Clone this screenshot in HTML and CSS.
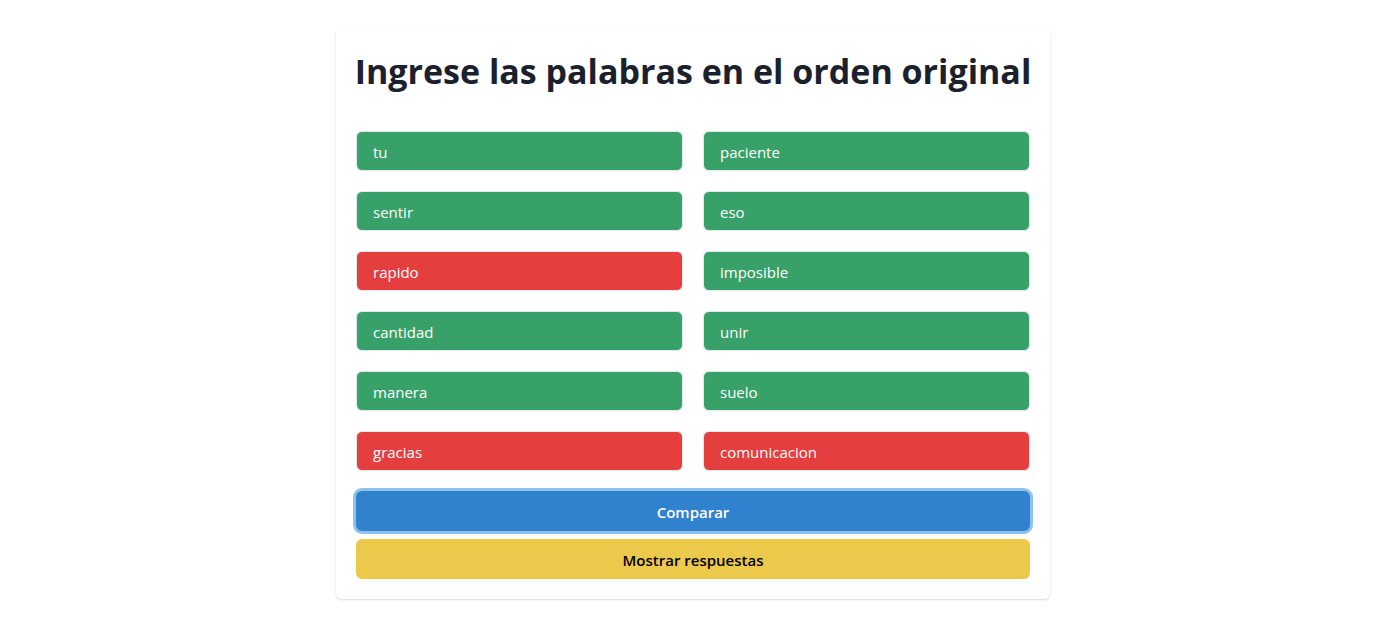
FILE: index.html
```html
<!DOCTYPE html>
<html lang="es">
<head>
<meta charset="utf-8">
<meta name="viewport" content="width=device-width, initial-scale=1">
<title>Ingrese las palabras</title>
<link rel="stylesheet" href="styles.css">
</head>
<body>
<main class="page">
<form class="card">
<h1 class="title">Ingrese las palabras en el orden original</h1>
<div class="words">
<input class="word correct" type="text" aria-label="Palabra 1" value="tu">
<input class="word correct" type="text" aria-label="Palabra 2" value="paciente">
<input class="word correct" type="text" aria-label="Palabra 3" value="sentir">
<input class="word correct" type="text" aria-label="Palabra 4" value="eso">
<input class="word wrong" type="text" aria-label="Palabra 5" value="rapido">
<input class="word correct" type="text" aria-label="Palabra 6" value="imposible">
<input class="word correct" type="text" aria-label="Palabra 7" value="cantidad">
<input class="word correct" type="text" aria-label="Palabra 8" value="unir">
<input class="word correct" type="text" aria-label="Palabra 9" value="manera">
<input class="word correct" type="text" aria-label="Palabra 10" value="suelo">
<input class="word wrong" type="text" aria-label="Palabra 11" value="gracias">
<input class="word wrong" type="text" aria-label="Palabra 12" value="comunicacion">
</div>
<div class="actions">
<button class="button compare" type="button">Comparar</button>
<button class="button reveal" type="button">Mostrar respuestas</button>
</div>
</form>
</main>
</body>
</html>
```
FILE: styles.css
```css
*, *::before, *::after { box-sizing: border-box; }

body {
  margin: 0;
  background: #fff;
  color: #1a202c;
  font-family: "Segoe UI", "Open Sans", "Noto Sans", sans-serif;
}

.page {
  display: flex;
  justify-content: center;
  padding: 28px 8px 28px 20px;
}

.card {
  width: 100%;
  max-width: 714px;
  padding: 20px;
  border-radius: 6px;
  box-shadow: 0 1px 3px rgba(0, 0, 0, 0.1), 0 1px 2px rgba(0, 0, 0, 0.06);
}

.title {
  margin: 0 -4px 36px;
  font-size: 34px;
  line-height: 47px;
  font-weight: 700;
  text-align: center;
}

.words {
  display: grid;
  grid-template-columns: repeat(2, minmax(0, 1fr));
  gap: 20px;
}

.word {
  width: 100%;
  height: 40px;
  padding: 2px 16px 0;
  border: 1px solid #e2e8f0;
  border-radius: 6px;
  color: #fff;
  font: inherit;
  font-size: 15px;
}

.correct { background: #38a169; }
.wrong { background: #e53e3e; }

.actions {
  display: grid;
  gap: 8px;
  margin-top: 20px;
}

.button {
  height: 40px;
  padding: 2px 16px 0;
  border: 0;
  border-radius: 6px;
  font: inherit;
  font-size: 15px;
  font-weight: 600;
}

.compare {
  background: #3182ce;
  color: #fff;
  box-shadow: 0 0 0 3px rgba(66, 153, 225, 0.6);
}

.reveal {
  background: #ecc94b;
  color: #000;
}
```
